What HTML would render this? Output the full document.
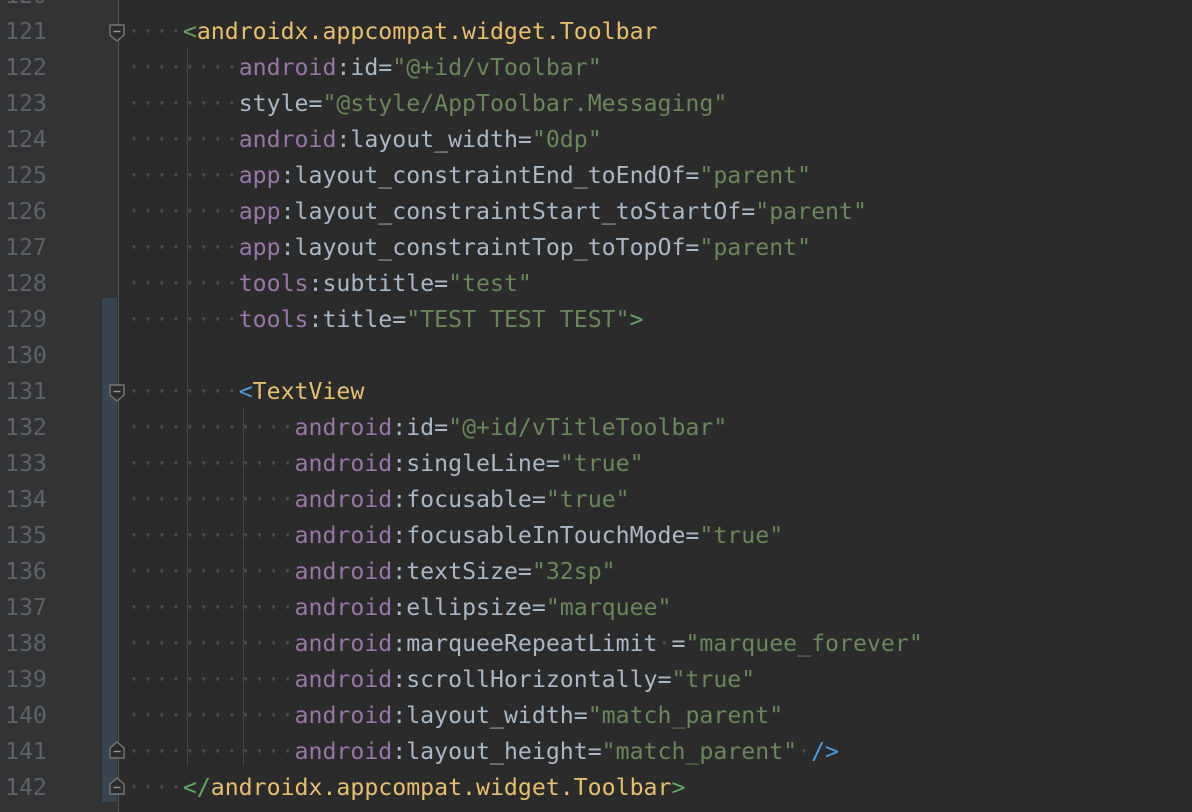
<!DOCTYPE html>
<html><head><meta charset="utf-8"><style>
body{margin:0;width:1192px;height:812px;background:#2b2b2b;overflow:hidden;position:relative;font-family:"DejaVu Sans Mono","Liberation Mono",monospace;font-size:23.2px}
.g{position:absolute;left:0;top:0;width:118px;height:812px;background:#313335}
.gl{position:absolute;left:118px;top:0;width:1px;height:812px;background:#555}
.chg{position:absolute;left:102px;top:298px;width:15px;height:504px;background:#374452}
.n{position:absolute;left:5px;width:60px;color:#606366;height:36px;line-height:36px;margin-top:2px}
.l{position:absolute;left:127px;height:36px;line-height:36px;white-space:pre;color:#a9b7c6;margin-top:2px}
.d{color:#4a4a4a}
.t{color:#e8bf6a}.a{color:#9876aa}.v{color:#6a8759}.gr{color:#5faa5f}.b{color:#4a9de0}
.ig{position:absolute;width:1px;background:#464646}
.f{position:absolute;left:108px;width:18px;height:18px}
</style></head><body>
<div class="g"></div><div class="chg"></div><div class="gl"></div>
<div class="ig" style="left:187px;top:48px;height:718px"></div>
<div class="ig" style="left:243px;top:408px;height:358px"></div>
<div class="n" style="top:-24px">120</div>
<div class="n" style="top:12px">121</div>
<div class="n" style="top:48px">122</div>
<div class="n" style="top:84px">123</div>
<div class="n" style="top:120px">124</div>
<div class="n" style="top:156px">125</div>
<div class="n" style="top:192px">126</div>
<div class="n" style="top:228px">127</div>
<div class="n" style="top:264px">128</div>
<div class="n" style="top:300px">129</div>
<div class="n" style="top:336px">130</div>
<div class="n" style="top:372px">131</div>
<div class="n" style="top:408px">132</div>
<div class="n" style="top:444px">133</div>
<div class="n" style="top:480px">134</div>
<div class="n" style="top:516px">135</div>
<div class="n" style="top:552px">136</div>
<div class="n" style="top:588px">137</div>
<div class="n" style="top:624px">138</div>
<div class="n" style="top:660px">139</div>
<div class="n" style="top:696px">140</div>
<div class="n" style="top:732px">141</div>
<div class="n" style="top:768px">142</div>

<svg class="f" style="top:24px" viewBox="0 0 18 18"><path d="M2 1H16V11L9 17L2 11Z" fill="#2b2b2b" stroke="#777" stroke-width="1.4"/><path d="M5.5 7.5H12.5" stroke="#999" stroke-width="1.4"/></svg>
<svg class="f" style="top:384px" viewBox="0 0 18 18"><path d="M2 1H16V11L9 17L2 11Z" fill="#2b2b2b" stroke="#777" stroke-width="1.4"/><path d="M5.5 7.5H12.5" stroke="#999" stroke-width="1.4"/></svg>
<svg class="f" style="top:741px" viewBox="0 0 18 18"><path d="M2 17H16V7L9 1L2 7Z" fill="#2b2b2b" stroke="#777" stroke-width="1.4"/><path d="M5.5 10.5H12.5" stroke="#999" stroke-width="1.4"/></svg>
<svg class="f" style="top:777px" viewBox="0 0 18 18"><path d="M2 17H16V7L9 1L2 7Z" fill="#2b2b2b" stroke="#777" stroke-width="1.4"/><path d="M5.5 10.5H12.5" stroke="#999" stroke-width="1.4"/></svg>

<div class="l" style="top:12px"><span class="d">····</span><span class="gr">&lt;</span><span class="t">androidx.appcompat.widget.Toolbar</span></div>
<div class="l" style="top:48px"><span class="d">········</span><span class="a">android</span>:id=<span class="v">"@+id/vToolbar"</span></div>
<div class="l" style="top:84px"><span class="d">········</span>style=<span class="v">"@style/AppToolbar.Messaging"</span></div>
<div class="l" style="top:120px"><span class="d">········</span><span class="a">android</span>:layout_width=<span class="v">"0dp"</span></div>
<div class="l" style="top:156px"><span class="d">········</span><span class="a">app</span>:layout_constraintEnd_toEndOf=<span class="v">"parent"</span></div>
<div class="l" style="top:192px"><span class="d">········</span><span class="a">app</span>:layout_constraintStart_toStartOf=<span class="v">"parent"</span></div>
<div class="l" style="top:228px"><span class="d">········</span><span class="a">app</span>:layout_constraintTop_toTopOf=<span class="v">"parent"</span></div>
<div class="l" style="top:264px"><span class="d">········</span><span class="a">tools</span>:subtitle=<span class="v">"test"</span></div>
<div class="l" style="top:300px"><span class="d">········</span><span class="a">tools</span>:title=<span class="v">"TEST TEST TEST"</span><span class="gr">&gt;</span></div>
<div class="l" style="top:372px"><span class="d">········</span><span class="b">&lt;</span><span class="t">TextView</span></div>
<div class="l" style="top:408px"><span class="d">············</span><span class="a">android</span>:id=<span class="v">"@+id/vTitleToolbar"</span></div>
<div class="l" style="top:444px"><span class="d">············</span><span class="a">android</span>:singleLine=<span class="v">"true"</span></div>
<div class="l" style="top:480px"><span class="d">············</span><span class="a">android</span>:focusable=<span class="v">"true"</span></div>
<div class="l" style="top:516px"><span class="d">············</span><span class="a">android</span>:focusableInTouchMode=<span class="v">"true"</span></div>
<div class="l" style="top:552px"><span class="d">············</span><span class="a">android</span>:textSize=<span class="v">"32sp"</span></div>
<div class="l" style="top:588px"><span class="d">············</span><span class="a">android</span>:ellipsize=<span class="v">"marquee"</span></div>
<div class="l" style="top:624px"><span class="d">············</span><span class="a">android</span>:marqueeRepeatLimit<span class="d">·</span>=<span class="v">"marquee_forever"</span></div>
<div class="l" style="top:660px"><span class="d">············</span><span class="a">android</span>:scrollHorizontally=<span class="v">"true"</span></div>
<div class="l" style="top:696px"><span class="d">············</span><span class="a">android</span>:layout_width=<span class="v">"match_parent"</span></div>
<div class="l" style="top:732px"><span class="d">············</span><span class="a">android</span>:layout_height=<span class="v">"match_parent"</span><span class="d">·</span><span class="b">/&gt;</span></div>
<div class="l" style="top:768px"><span class="d">····</span><span class="gr">&lt;/</span><span class="t">androidx.appcompat.widget.Toolbar</span><span class="gr">&gt;</span></div>
</body></html>
